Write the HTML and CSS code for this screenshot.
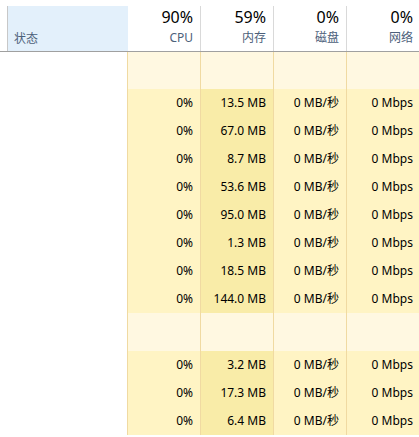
FILE: index.html
```html
<!DOCTYPE html>
<html lang="zh-CN">
<head>
<meta charset="utf-8">
<title>任务管理器</title>
<link rel="stylesheet" href="styles.css">
</head>
<body>
<div class="table">
  <div class="head">
    <div class="hcell status"><span class="label">状态</span></div>
    <div class="hcell"><span class="pct">90%</span><span class="label">CPU</span></div>
    <div class="hcell"><span class="pct">59%</span><span class="label">内存</span></div>
    <div class="hcell"><span class="pct">0%</span><span class="label">磁盘</span></div>
    <div class="hcell last"><span class="pct">0%</span><span class="label">网络</span></div>
  </div>

  <div class="row group g1"><div class="cell status"></div><div class="cell"></div><div class="cell"></div><div class="cell"></div><div class="cell last"></div></div>

  <div class="row"><div class="cell status"></div><div class="cell">0%</div><div class="cell mem">13.5 MB</div><div class="cell">0 MB/秒</div><div class="cell last">0 Mbps</div></div>
  <div class="row"><div class="cell status"></div><div class="cell">0%</div><div class="cell mem">67.0 MB</div><div class="cell">0 MB/秒</div><div class="cell last">0 Mbps</div></div>
  <div class="row"><div class="cell status"></div><div class="cell">0%</div><div class="cell mem">8.7 MB</div><div class="cell">0 MB/秒</div><div class="cell last">0 Mbps</div></div>
  <div class="row"><div class="cell status"></div><div class="cell">0%</div><div class="cell mem">53.6 MB</div><div class="cell">0 MB/秒</div><div class="cell last">0 Mbps</div></div>
  <div class="row"><div class="cell status"></div><div class="cell">0%</div><div class="cell mem">95.0 MB</div><div class="cell">0 MB/秒</div><div class="cell last">0 Mbps</div></div>
  <div class="row"><div class="cell status"></div><div class="cell">0%</div><div class="cell mem">1.3 MB</div><div class="cell">0 MB/秒</div><div class="cell last">0 Mbps</div></div>
  <div class="row"><div class="cell status"></div><div class="cell">0%</div><div class="cell mem">18.5 MB</div><div class="cell">0 MB/秒</div><div class="cell last">0 Mbps</div></div>
  <div class="row"><div class="cell status"></div><div class="cell">0%</div><div class="cell mem">144.0 MB</div><div class="cell">0 MB/秒</div><div class="cell last">0 Mbps</div></div>

  <div class="row group g2"><div class="cell status"></div><div class="cell"></div><div class="cell"></div><div class="cell"></div><div class="cell last"></div></div>

  <div class="row"><div class="cell status"></div><div class="cell">0%</div><div class="cell mem">3.2 MB</div><div class="cell">0 MB/秒</div><div class="cell last">0 Mbps</div></div>
  <div class="row"><div class="cell status"></div><div class="cell">0%</div><div class="cell mem">17.3 MB</div><div class="cell">0 MB/秒</div><div class="cell last">0 Mbps</div></div>
  <div class="row"><div class="cell status"></div><div class="cell">0%</div><div class="cell mem">6.4 MB</div><div class="cell">0 MB/秒</div><div class="cell last">0 Mbps</div></div>
</div>
</body>
</html>
```

FILE: styles.css
```css
*, *::before, *::after {
  box-sizing: border-box;
}

html, body {
  margin: 0;
  padding: 0;
  background: #ffffff;
}

body {
  font-family: "Noto Sans", "Noto Sans CJK SC", sans-serif;
  font-size: 12px;
  color: #000000;
  overflow: hidden;
}

.table {
  width: 419px;
}

/* column header */
.head {
  display: grid;
  grid-template-columns: 128px 73px 73px 73px 1fr;
  padding-top: 6px;
  border-bottom: 1px solid #a0a0a0;
}

.hcell {
  height: 45px;
  display: flex;
  flex-direction: column;
  align-items: flex-end;
  padding-right: 7px;
  border-right: 1px solid #d9d9d9;
  overflow: hidden;
}

.hcell.last {
  border-right: none;
  padding-right: 6px;
}

.hcell.status {
  margin-left: 7px;
  border-left: 1px solid #c8c8c8;
  border-right: none;
  background: #e3f0fb;
  align-items: flex-start;
  justify-content: flex-end;
  padding: 0 0 4px 6px;
}

.pct {
  font-size: 16px;
  line-height: 22px;
  color: #000000;
}

.label {
  margin-top: 2px;
  font-size: 12px;
  line-height: 16px;
  color: #4c607a;
}

.hcell.status .label {
  margin-top: 0;
}

/* body rows */
.row {
  display: grid;
  grid-template-columns: 128px 73px 73px 73px 1fr;
  height: 28px;
}

.row.g1 {
  height: 37px;
}

.row.g2 {
  height: 38px;
}

.cell {
  background: #fff4c4;
  border-right: 1px solid #f0daa2;
  text-align: right;
  padding-right: 7px;
  line-height: 28px;
  white-space: nowrap;
}

.cell.mem {
  background: #f9eca8;
}

.cell.last {
  border-right: none;
  padding-right: 6px;
}

.cell.status {
  background: #ffffff;
}

.group .cell {
  background: #fff8e1;
}

.group .cell.status {
  background: #ffffff;
}
```
